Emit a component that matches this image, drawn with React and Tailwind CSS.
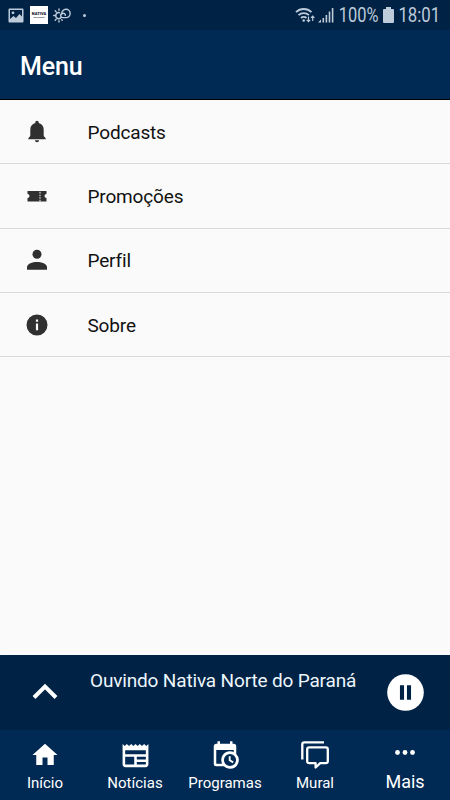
const menuItems = [
  { label: 'Podcasts', Icon: BellIcon },
  { label: 'Promoções', Icon: TicketIcon },
  { label: 'Perfil', Icon: PersonIcon },
  { label: 'Sobre', Icon: InfoIcon },
];

const tabs = [
  { label: 'Início', Icon: HomeIcon },
  { label: 'Notícias', Icon: NewsIcon },
  { label: 'Programas', Icon: CalendarIcon },
  { label: 'Mural', Icon: ChatIcon },
  { label: 'Mais', Icon: MoreIcon, active: true },
];

function BellIcon() {
  return (
    <svg viewBox="0 0 26 26" className="size-[26px]" fill="currentColor">
      <path d="M13 1.800c-1 0-1.700.7-1.700 1.700v.6C8 4.900 6.300 7.500 6.300 10.800V17l-2 2.300v1h17.400v-1l-2-2.300v-6.200C19.700 7.500 18 4.900 14.700 4.100v-.6c0-1-.7-1.700-1.700-1.700zM10.900 21.200a2.100 2.100 0 0 0 4.200 0z" />
    </svg>
  );
}

function TicketIcon() {
  return (
    <svg viewBox="0 0 26 26" className="size-[26px]" fill="currentColor">
      <path fillRule="evenodd" d="M3.500 8h19v3a2 2 0 0 0 0 4v3.500h-19V15a2 2 0 0 0 0-4zM15.500 8.800v1.600h1V8.800zm0 2.900v1.600h1v-1.600zm0 2.600v1.500h1v-1.500zm0 2.400v1.500h1v-1.500z" />
    </svg>
  );
}

function PersonIcon() {
  return (
    <svg viewBox="0 0 26 26" className="size-[26px]" fill="currentColor">
      <circle cx="13" cy="7.200" r="4.500" />
      <path d="M3 22.700v-2.600c0-3.400 5.500-5.200 10-5.200s10 1.800 10 5.200v2.600z" />
    </svg>
  );
}

function InfoIcon() {
  return (
    <svg viewBox="0 0 26 26" className="size-[26px]" fill="currentColor">
      <path fillRule="evenodd" d="M13 2.500a10.500 10.500 0 1 0 0 21 10.500 10.500 0 0 0 0-21zM11.900 7.500h2.200v2.200h-2.200zm0 4h2.200v6.800h-2.200z" />
    </svg>
  );
}

function HomeIcon() {
  return (
    <svg viewBox="0 0 24 24" className="size-[30px]" fill="currentColor">
      <path d="M10 20v-6h4v6h5v-8h3L12 3 2 12h3v8z" />
    </svg>
  );
}

function NewsIcon() {
  return (
    <svg viewBox="0 0 24 24" className="size-[31px]" fill="currentColor">
      <path d="M22 3l-1.670 1.670L18.670 3 17 4.670 15.330 3l-1.660 1.670L12 3l-1.670 1.670L8.670 3 7 4.670 5.330 3 3.670 4.670 2 3v16c0 1.100.9 2 2 2h16c1.100 0 2-.9 2-2V3zM11 19H4v-6h7v6zm9 0h-7v-2h7v2zm0-4h-7v-2h7v2zm0-4H4V8h16v3z" />
    </svg>
  );
}

function CalendarIcon() {
  return (
    <svg viewBox="0 0 24 24" className="size-[30px]" fill="currentColor">
      <path d="M15 13h1.500v2.820l2.440 1.410-.75 1.300L15 16.690V13m4-5H5v11h4.670A7 7 0 0 1 16 9c1.070 0 2.090.24 3 .67V8M5 21a2 2 0 0 1-2-2V5c0-1.110.89-2 2-2h1V1h2v2h8V1h2v2h1a2 2 0 0 1 2 2v6.100A7 7 0 0 1 16 23c-1.910 0-3.640-.76-4.900-2H5m11-9.850A4.850 4.850 0 0 0 11.150 16a4.850 4.850 0 1 0 4.850-4.850z" />
    </svg>
  );
}

function ChatIcon() {
  return (
    <svg viewBox="0 0 30 30" className="size-[30px]" fill="none" stroke="currentColor" strokeWidth="2.300">
      <path d="M2.300 19.500V4.300a2 2 0 0 1 2-2H24" />
      <path strokeLinejoin="round" d="M9.200 7.300h16.600a2 2 0 0 1 2 2v11.900a2 2 0 0 1-2 2h-5.600l-4.600 4.300v-4.300H9.200a2 2 0 0 1-2-2V9.300a2 2 0 0 1 2-2z" />
    </svg>
  );
}

function MoreIcon() {
  return (
    <svg viewBox="0 0 30 30" className="size-[30px]" fill="currentColor">
      <circle cx="7.500" cy="12.500" r="2.400" />
      <circle cx="15" cy="12.500" r="2.400" />
      <circle cx="22.500" cy="12.500" r="2.400" />
    </svg>
  );
}

function StatusBar() {
  return (
    <div className="h-[30px] shrink-0 bg-[#002244] flex items-center justify-between pl-2 pr-2.5 text-[#bdcbda]">
      <div className="flex items-center">
        <svg viewBox="0 0 16 15" className="w-4 h-[15px]">
          <path fill="currentColor" fillRule="evenodd" d="M1.500.5h13a1 1 0 0 1 1 1v12a1 1 0 0 1-1 1h-13a1 1 0 0 1-1-1v-12a1 1 0 0 1 1-1zM2 2v9l3.500-3 2.500 2 3.500-4 2.500 2.500V2z" />
          <circle cx="5" cy="4.800" r="1.400" fill="currentColor" />
        </svg>
        <div className="ml-1.5 w-[18px] h-[18px] bg-white flex flex-col items-center justify-center text-[#14202c]">
          <span className="text-[4px] leading-[4px] font-black">NATIVA</span>
          <span className="text-[2px] leading-[2px] font-bold">FM PARANÁ</span>
        </div>
        <svg viewBox="0 0 18 15" className="ml-[5px] w-[18px] h-[15px]" fill="none" stroke="currentColor" strokeWidth="1.400" strokeLinecap="round">
          <path d="M6.500 4.700a3 3 0 1 0 1.800 4.500M6 .9v1.300M2.200 2.800l.9.900M.7 7.500h1.200M2.200 12.200l.9-.9M6 12.800V14M9.200 12.200l-.5-.5" />
          <path d="M13 9.600H9.800a2 2 0 0 1-.3-4M8.700 6.200C8.400 3.500 10.500 1.300 13 1.300a4.100 4.100 0 0 1 0 8.300M12.300 7.300a1.800 1.800 0 0 0-2.800-1.700" />
        </svg>
        <span className="ml-3 size-[3px] rounded-full bg-current" />
      </div>
      <div className="flex items-center">
        <svg viewBox="0 0 21 17" className="w-[21px] h-[17px]" fill="none" stroke="currentColor" strokeWidth="1.800">
          <path d="M1 5.200a11 11 0 0 1 15.500 0M3.500 8.200a7.500 7.500 0 0 1 10.500 0M6 11a4 4 0 0 1 5.500 0" />
          <circle cx="8.700" cy="13.500" r="1.300" fill="currentColor" stroke="none" />
          <path strokeWidth="1.200" d="M13.500 9.500v5M11.800 12.800l1.700 1.800 1.700-1.800M17.700 14V9M16 10.800l1.700-1.800 1.700 1.800" />
        </svg>
        <svg viewBox="0 0 16 16" className="ml-0.5 w-4 h-4" fill="currentColor">
          <path d="M0 15.500l3-3v3zM4.500 11h1.600v4.500H4.500zM7.600 8h1.600v7.500H7.600zM10.700 4.500h1.600v11h-1.600zM13.800 1h1.600v14.500h-1.600z" />
        </svg>
        <div className="ml-1 mt-0.5 w-[41px] flex justify-center">
          <span className="text-[19.5px] leading-[30px] scale-x-[.84]">100%</span>
        </div>
        <svg viewBox="0 0 11 16" className="ml-1 w-[11px] h-4" fill="currentColor">
          <path d="M3 0h5v2h2a1 1 0 0 1 1 1v12a1 1 0 0 1-1 1H1a1 1 0 0 1-1-1V3a1 1 0 0 1 1-1h2z" />
        </svg>
        <div className="ml-1 mt-0.5 w-[42px] flex justify-center">
          <span className="text-[19.5px] leading-[30px] scale-x-[.86]">18:01</span>
        </div>
      </div>
    </div>
  );
}

function Player() {
  return (
    <div className="h-[75px] shrink-0 bg-[#002a54]">
      <div className="h-full rounded-[3px] bg-[#002244] flex items-center pl-8 pr-[26px]">
        <svg viewBox="0 0 26 16" className="mb-[3px] w-[26px] h-4" fill="none" stroke="white" strokeWidth="4">
          <path d="M2 14.500L13 3.500l11 11" />
        </svg>
        <span className="self-start ml-8 mt-[11px] text-[19px] leading-[30px] tracking-[-0.16px] whitespace-nowrap text-[#edf6fc]">
          Ouvindo Nativa Norte do Paraná
        </span>
        <svg viewBox="0 0 38 38" className="ml-auto size-[37px]">
          <circle cx="19" cy="19" r="18.800" fill="white" />
          <path fill="#002244" d="M13.300 11.500h4.200v15h-4.200zM20.500 11.500h4.200v15h-4.200z" />
        </svg>
      </div>
    </div>
  );
}

export default function App() {
  return (
    <div className="w-[450px] h-[800px] overflow-hidden flex flex-col bg-[#fafafa] font-[Roboto,sans-serif]">
      <StatusBar />
      <header className="h-[70px] shrink-0 bg-[#002a54] border-b border-black flex items-center pl-5">
        <h1 className="text-[25px] font-medium text-white mt-1 tracking-[-0.1px]">Menu</h1>
      </header>
      <main className="flex-1">
        {menuItems.map(({ label, Icon }) => (
          <div key={label} className="h-[64.3px] flex items-center pl-6 border-b border-[#d8d8d8] text-[#303030]">
            <Icon />
            <span className="ml-[37.5px] mt-[3px] text-[19px] tracking-[-0.16px] text-[#111]">{label}</span>
          </div>
        ))}
      </main>
      <Player />
      <nav className="h-[70px] shrink-0 bg-[#002a54] grid grid-cols-5 text-white">
        {tabs.map(({ label, Icon, active }) => (
          <div key={label} className="flex flex-col items-center pt-2.5">
            <div className="h-[30px] flex items-center">
              <Icon />
            </div>
            <span className={active ? 'text-[18px] leading-6 tracking-[-0.1px]' : 'mt-px text-[15px] leading-6'}>{label}</span>
          </div>
        ))}
      </nav>
    </div>
  );
}
